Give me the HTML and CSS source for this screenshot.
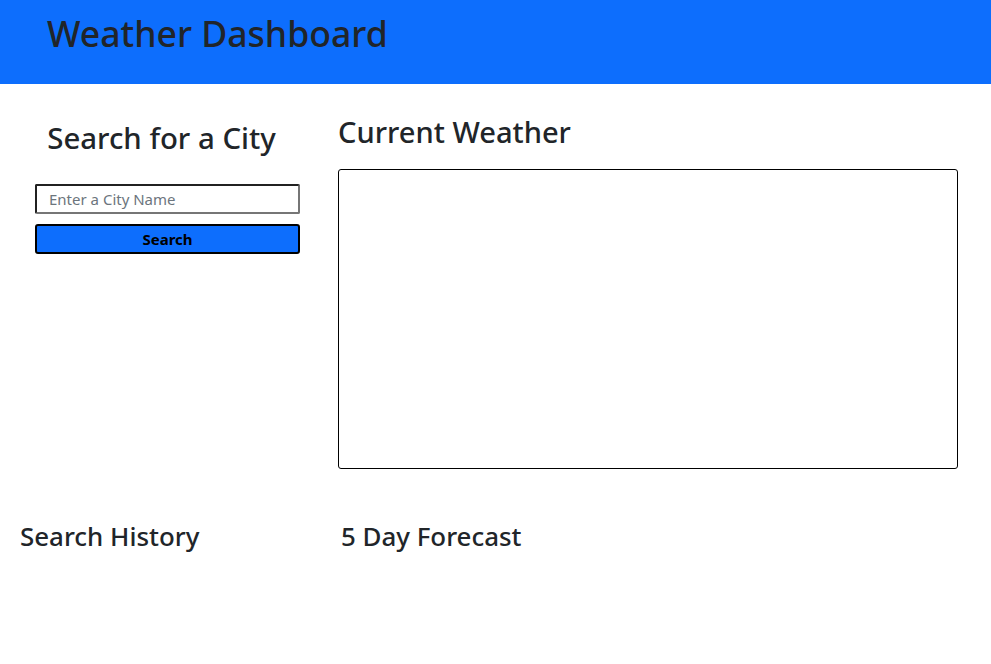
FILE: index.html
```html
<!DOCTYPE html>
<html>
<head>
<meta charset="utf-8">
<link rel="stylesheet" href="styles.css">
</head>
<body>
<header class="topbar">
  <h1 class="title">Weather Dashboard</h1>
</header>
<main class="main">
  <section class="row">
    <aside class="side">
      <h2 class="side-title">Search for a City</h2>
      <form class="search-form">
        <input class="city-input" type="text" placeholder="Enter a City Name">
        <button class="search-btn" type="button">Search</button>
      </form>
    </aside>
    <div class="content">
      <h2 class="content-title">Current Weather</h2>
      <div class="current-box"></div>
    </div>
  </section>
  <section class="row bottom">
    <div class="side">
      <h3 class="sub-title">Search History</h3>
    </div>
    <div class="content">
      <h3 class="sub-title forecast">5 Day Forecast</h3>
    </div>
  </section>
</main>
</body>
</html>
```
FILE: styles.css
```css
* { box-sizing: border-box; }
body {
  margin: 0;
  font-family: "Noto Sans", "Open Sans", sans-serif;
  color: #212529;
  background: #fff;
}
.topbar {
  background: #0d6efd;
  height: 84px;
  padding-left: 47px;
  display: flex;
  align-items: flex-start;
}
.title {
  margin: 12px 0 0;
  font-size: 35.6px;
  font-weight: 500;
  line-height: 1.2;
}
.main { padding: 0 33px 0 20px; }
.row { display: flex; }
.side { width: 295px; flex: none; padding: 0 15px; }
.content { flex: 1; margin-left: 23px; }
.side-title {
  margin: 37px 0 0;
  text-align: center;
  font-size: 29.4px;
  font-weight: 500;
  line-height: 1.2;
  padding-right: 12px;
}
.search-form { display: flex; flex-direction: column; gap: 10px; margin-top: 28px; }
.city-input {
  height: 30px;
  border: 2px inset #767676;
  border-radius: 2px;
  padding: 0 12px;
  font-family: inherit;
  font-size: 15px;
}
.city-input::placeholder { color: #6c757d; }
.search-btn {
  height: 30px;
  background: #0d6efd;
  border: 2px solid #000;
  border-radius: 3px;
  font-family: inherit;
  font-weight: 700;
  font-size: 15px;
  color: #000;
}
.content-title {
  margin: 31px 0 0;
  font-size: 29.1px;
  font-weight: 500;
  line-height: 1.2;
}
.current-box {
  margin-top: 19px;
  height: 300px;
  border: 1px solid #000;
  border-radius: 3px;
}
.bottom { margin-top: 52px; }
.bottom .side { padding: 0; }
.sub-title {
  margin: 0;
  font-size: 25.9px;
  font-weight: 500;
  line-height: 1.2;
}
.forecast { margin-left: 3px; }
```
